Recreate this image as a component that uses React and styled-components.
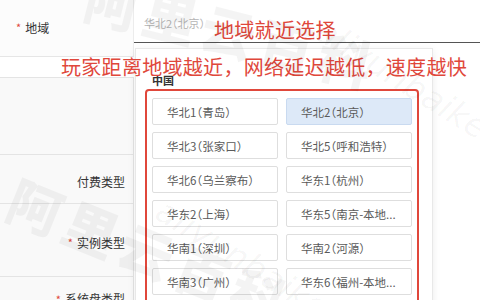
import React from 'react';
import styled, { createGlobalStyle } from 'styled-components';

const RED = '#e0473b';

const regions = [
    ['华北1（青岛）', '华北2（北京）'],
    ['华北3（张家口）', '华北5（呼和浩特）'],
    ['华北6（乌兰察布）', '华东1（杭州）'],
    ['华东2（上海）', '华东5（南京-本地...'],
    ['华南1（深圳）', '华南2（河源）'],
    ['华南3（广州）', '华东6（福州-本地...'],
];

const labels = [
    { text: '', height: 77 },
    { text: '付费类型', height: 49 },
    { text: '实例类型', height: 73, required: true },
    { text: '系统盘类型', height: 40, required: true },
];

const GlobalStyle = createGlobalStyle`
  html, body {
    margin: 0;
    padding: 0;
    background: #fff;
  }
  body {
    font-family: "Noto Sans CJK SC", "Noto Sans", sans-serif;
    color: #333;
  }
`;

const App = () => {
    return (
        <>
            <GlobalStyle/>
            <Page>
                <TopRow>
                    <FirstLabel>
                        <Star>*</Star>地域
                    </FirstLabel>
                    <SelectBox>华北2（北京）</SelectBox>
                </TopRow>
                <Spacer/>
                <Body>
                    <LabelColumn>
                        {labels.map((l, i) => (
                            <LabelCell key={i} style={{height: l.height}}>
                                {l.required && <Star>*</Star>}
                                {l.text}
                            </LabelCell>
                        ))}
                    </LabelColumn>
                </Body>

                <Dropdown>
                    <GroupTitle>中国</GroupTitle>
                    <RedFrame>
                        <OptionGrid>
                            {regions.flat().map((name) => (
                                <Option key={name} $active={name === '华北2（北京）'}>
                                    {name}
                                </Option>
                            ))}
                        </OptionGrid>
                    </RedFrame>
                </Dropdown>

                <NoteTitle>地域就近选择</NoteTitle>
                <NoteLine>玩家距离地域越近，网络延迟越低，速度越快</NoteLine>

                <Watermark $x={26} $y={158} $rot={22}>阿里云百科</Watermark>
                <Watermark $x={96} $y={-44} $rot={14}>阿里云百科</Watermark>
                <SiteMark $x={170} $y={190}>aliyunbaike.com</SiteMark>
                <SiteMark $x={330} $y={10}>aliyunbaike.com</SiteMark>
            </Page>
        </>
    );
};

const Page = styled.div`
  position: relative;
  width: 480px;
  height: 300px;
  overflow: hidden;
  background: #fff;
`;

const TopRow = styled.div`
  display: grid;
  grid-template-columns: 134px 1fr;
  height: 57px;
`;

const FirstLabel = styled.div`
  display: flex;
  align-items: center;
  padding-left: 16px;
  padding-bottom: 2px;
  font-size: 12px;
  color: #333;
  background: #fcfcfc;
  border-right: 1px solid #ececec;
  border-bottom: 1px solid #e6e6e6;
`;

const Star = styled.span`
  color: ${RED};
  margin-right: 4px;
  font-size: 11px;
`;

const SelectBox = styled.div`
  height: 43px;
  box-sizing: border-box;
  display: flex;
  align-items: center;
  padding: 4px 0 0 10px;
  font-size: 11px;
  font-feature-settings: "halt";
  color: #b5b5b5;
  border-bottom: 1px solid #555;
  background: #fff;
`;

const Spacer = styled.div`
  height: 20px;
`;

const Body = styled.div`
  display: grid;
  grid-template-columns: 134px 1fr;
`;

const LabelColumn = styled.div`
  display: flex;
  flex-direction: column;
  background: #f9f9f9;
  border-right: 1px solid #e4e4e4;
  border-top: 1px solid #e4e4e4;
`;

const LabelCell = styled.div`
  box-sizing: border-box;
  display: flex;
  align-items: center;
  justify-content: flex-end;
  padding: 4px 8px 0 0;
  font-size: 12px;
  color: #333;
  border-bottom: 1px solid #e4e4e4;
`;

const Dropdown = styled.div`
  position: absolute;
  left: 135px;
  top: 48px;
  width: 298px;
  height: 270px;
  box-sizing: border-box;
  display: flex;
  flex-direction: column;
  align-items: flex-start;
  background: #fff;
  border: 1px solid #e8e8e8;
  box-shadow: 0 2px 8px rgba(0, 0, 0, 0.08);
  padding: 25px 0 0 9px;
`;

const GroupTitle = styled.div`
  margin-left: 7px;
  font-size: 11px;
  line-height: 13px;
  font-weight: 700;
  color: #333;
`;

const RedFrame = styled.div`
  margin-top: 2px;
  width: 274px;
  height: 240px;
  box-sizing: border-box;
  border: 2px solid ${RED};
  border-radius: 4px;
  padding: 7px 0 0 5px;
`;

const OptionGrid = styled.div`
  display: grid;
  grid-template-columns: 126px 126px;
  grid-auto-rows: 27px;
  column-gap: 8px;
  row-gap: 7px;
`;

const Option = styled.div`
  box-sizing: border-box;
  display: flex;
  align-items: center;
  padding-left: 14px;
  font-size: 11.5px;
  font-feature-settings: "halt";
  color: #5a5a5a;
  white-space: nowrap;
  overflow: hidden;
  border: 1px solid ${(p) => (p.$active ? '#c9daf0' : '#dedede')};
  background: ${(p) => (p.$active ? '#dde9f8' : '#fff')};
  border-radius: 2px;
`;

const NoteTitle = styled.div`
  position: absolute;
  left: 214px;
  top: 17px;
  font-size: 20px;
  line-height: 26px;
  color: ${RED};
  letter-spacing: 0.3px;
`;

const NoteLine = styled.div`
  position: absolute;
  left: 61px;
  top: 54px;
  font-size: 20px;
  line-height: 26px;
  color: ${RED};
  letter-spacing: 0.3px;
  white-space: nowrap;
`;

const Watermark = styled.div`
  position: absolute;
  left: ${(p) => p.$x}px;
  top: ${(p) => p.$y}px;
  transform: rotate(${(p) => p.$rot}deg);
  transform-origin: left top;
  font-size: 54px;
  font-weight: 900;
  letter-spacing: 6px;
  color: rgba(0, 0, 0, 0.045);
  white-space: nowrap;
  pointer-events: none;
`;

const SiteMark = styled.div`
  position: absolute;
  left: ${(p) => p.$x}px;
  top: ${(p) => p.$y}px;
  transform: rotate(32deg);
  transform-origin: left top;
  font-family: "DejaVu Sans", sans-serif;
  font-style: italic;
  font-size: 34px;
  color: rgba(0, 0, 0, 0.04);
  white-space: nowrap;
  pointer-events: none;
`;

export default App;
